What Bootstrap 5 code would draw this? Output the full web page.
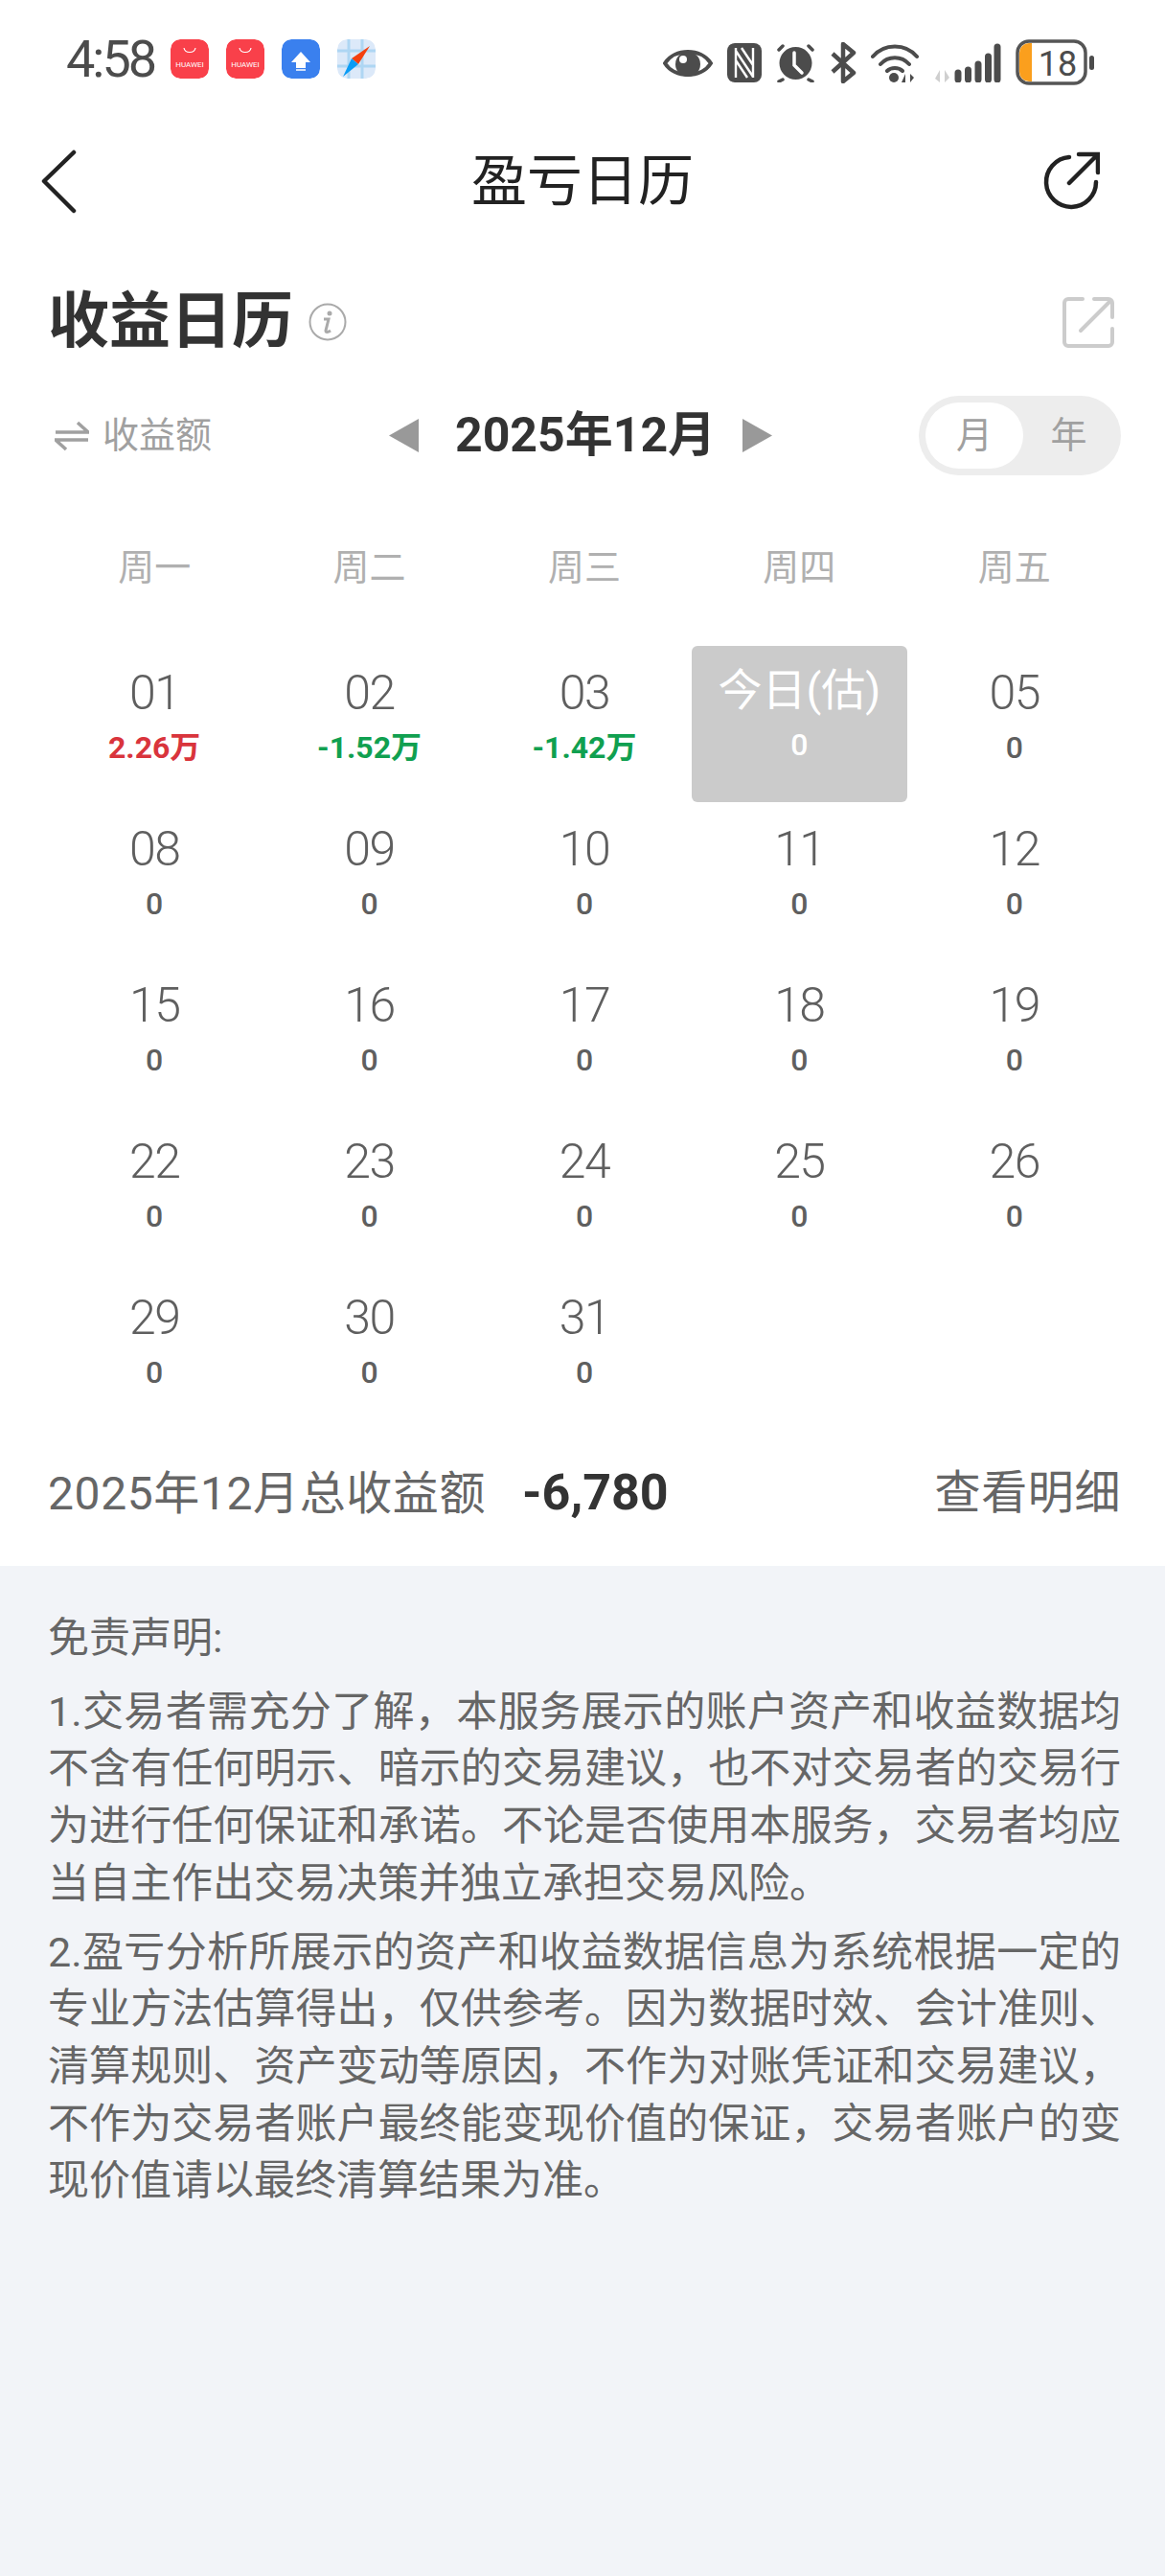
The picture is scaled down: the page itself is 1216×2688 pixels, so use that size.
<!DOCTYPE html>
<html lang="zh-CN">
<head>
<meta charset="UTF-8">
<title>盈亏日历</title>
<link href="https://cdn.jsdelivr.net/npm/bootstrap@5.3.0/dist/css/bootstrap.min.css" rel="stylesheet">
<style>
    body {
        width: 1216px;
        min-height: 2688px;
        background: #f2f4f8;
        font-family: Roboto, "Noto Sans CJK SC", sans-serif;
        color: #333;
    }
    .top-area { background: #fff; height: 1634px; }

    /* status bar */
    .status-bar { height: 139px; padding: 41px 73px 0 69px; }
    .clock { font-size: 54px; line-height: 41px; color: #4c4c4c; width: 109px; letter-spacing: -3px; }
    .app-tile { width: 40px; height: 41px; border-radius: 10px; }
    .tile-gap { gap: 18px; }
    .status-icons { gap: 15px; }

    /* nav */
    .nav-head { display: grid; grid-template-columns: 1fr auto 1fr; padding: 0 43px; height: 100px; }
    .nav-title { font-size: 58px; line-height: 100px; color: #222; font-weight: 400; }
    .nav-open { margin-right: 25px; }

    /* heading */
    .cal-head { padding: 0 52px 0 50px; margin-top: 56px; height: 82px; }
    .cal-title { font-size: 64px; line-height: 82px; font-weight: 700; color: #333; margin: 0; }

    /* switch row */
    .switch-row { padding: 0 46px 0 57px; height: 83px; margin-top: 36px; }
    .by-amount { font-size: 38px; color: #a0a0a0; width: 349px; gap: 14px; }
    .month-label { font-size: 50px; font-weight: 700; color: #333; width: 268px; text-align: center; margin: 0 32px 0 38px; white-space: nowrap; }
    .range-toggle { width: 211px; height: 83px; border-radius: 42px; background: #ededed; padding: 7px; font-size: 38px; color: #a0a0a0; margin-left: auto; }
    .range-on { width: 102px; height: 69px; border-radius: 35px; background: #fff; }
    .range-off { width: 95px; }

    /* calendar */
    .week-row, .day-grid { display: grid; grid-template-columns: repeat(5, 224.4px); padding-left: 49px; }
    .week-row { font-size: 38px; color: #b0b0b0; text-align: center; line-height: 50px; margin-top: 71px; }
    .day-grid { grid-auto-rows: 163px; margin-top: 57px; }
    .day-cell { text-align: center; padding-top: 21px; color: #5f5f5f; }
    .day-num { font-size: 50px; line-height: 56px; font-weight: 300; letter-spacing: -1.5px; }
    .day-val { font-size: 32px; line-height: 40px; margin-top: 9px; font-weight: 500; }
    .val-up { color: #d9343c; font-weight: 700; }
    .val-down { color: #10a050; font-weight: 700; }
    .day-today { background: #cbcbcb; color: #fff; border-radius: 6px; padding-top: 18px; }
    .day-today .day-num { font-size: 46px; font-weight: 400; letter-spacing: 0; }

    /* total */
    .total-row { padding: 0 46px 0 50px; height: 80px; margin-top: 29px; font-size: 48px; color: #666; line-height: 80px; letter-spacing: .6px; }
    .total-sum { font-weight: 700; color: #333; font-size: 52px; margin-left: 38px; letter-spacing: 0; }

    /* disclaimer */
    .notice { padding: 46px 46px 0 50px; font-size: 43px; line-height: 59.7px; color: #666; text-align: justify; }
    .notice p { margin: 0 0 12px; }
    .notice .notice-head { margin-bottom: 17px; }
</style>
</head>
<body>
<div class="top-area">
    <div class="status-bar d-flex align-items-start">
        <div class="clock">4:58</div>
        <div class="d-flex tile-gap">
            <svg class="app-tile" viewBox="0 0 40 41"><rect width="40" height="41" rx="10" fill="#f9404a"/><path d="M14 9c1 6 11 6 12 0" fill="none" stroke="#fff" stroke-width="1.2"/><text x="20" y="29" font-size="8" fill="#fff" text-anchor="middle" font-family="Roboto">HUAWEI</text></svg>
            <svg class="app-tile" viewBox="0 0 40 41"><rect width="40" height="41" rx="10" fill="#f9404a"/><path d="M14 9c1 6 11 6 12 0" fill="none" stroke="#fff" stroke-width="1.2"/><text x="20" y="29" font-size="8" fill="#fff" text-anchor="middle" font-family="Roboto">HUAWEI</text></svg>
            <svg class="app-tile" viewBox="0 0 40 41"><rect width="40" height="41" rx="10" fill="#3a80ee"/><path d="M20 13l10 11h-5v6H15v-6h-5z" fill="#fff"/><rect x="15" y="31" width="10" height="2" fill="#cfe0fb"/></svg>
            <svg class="app-tile" viewBox="0 0 40 41"><rect width="40" height="41" rx="10" fill="#dce9f9"/><path d="M12 0v41M26 0v41M0 12h40M0 28h40" stroke="#aed6f3" stroke-width="3"/><path d="M34 7L22 26 15 20z" fill="#f4400f"/><path d="M6 39l9-19 7 6z" fill="#0a9cf5"/></svg>
        </div>
        <div class="status-icons d-flex ms-auto align-items-center">
            <svg width="52" height="41" viewBox="0 0 52 41"><path d="M2 21C12 5 40 5 50 21 40 37 12 37 2 21z" fill="none" stroke="#4c4c4c" stroke-width="4"/><circle cx="26" cy="22" r="13" fill="#4c4c4c"/><circle cx="21" cy="17" r="4" fill="#fff"/></svg>
            <svg width="36" height="41" viewBox="0 0 36 41"><rect width="36" height="41" rx="8" fill="#4c4c4c"/><path d="M9 5v31M27 5v31M9 8l18 27M9 18l12 18M15 5l12 18" stroke="#fff" stroke-width="2.4" fill="none"/></svg>
            <svg width="41" height="41" viewBox="0 0 41 41"><circle cx="20.500" cy="21" r="17" fill="#4c4c4c"/><path d="M19 10v13l8 8" stroke="#fff" stroke-width="3.500" fill="none" stroke-linecap="round"/><path d="M3 7l4-4M38 7l-4-4M7 38l-4 2M34 38l4 2" stroke="#4c4c4c" stroke-width="3.500" stroke-linecap="round"/></svg>
            <svg width="28" height="43" viewBox="0 0 28 43"><path d="M3 12l22 20-11 9V2l11 9L3 31" fill="none" stroke="#4c4c4c" stroke-width="4.500" stroke-linejoin="round"/></svg>
            <svg width="50" height="41" viewBox="0 0 50 41"><path d="M2 14C14 0 36 0 48 14M10 22c8-9 22-9 30 0M17 29c4-4 12-4 16 0" fill="none" stroke="#4c4c4c" stroke-width="4" stroke-linecap="round"/><circle cx="24" cy="36" r="5" fill="#4c4c4c"/><path d="M36 41v-9l-4 9zM41 32v9l4-5z" fill="#4c4c4c"/></svg>
            <svg width="71" height="41" viewBox="0 0 71 41"><path d="M7 41V28l-5 9zM12 28v13l5-5z" fill="#cfcfcf"/><path d="M26 38v-7M36.500 38V28M47 38V22M57.500 38V14M67 38V4" fill="none" stroke="#4c4c4c" stroke-width="7" stroke-linecap="round"/></svg>
            <svg width="83" height="48" viewBox="0 0 83 48"><rect x="2" y="2" width="71" height="44" rx="12" fill="#fff" stroke="#555" stroke-width="3.500"/><path d="M4 14a10 10 0 0 1 10-10h3v40h-3a10 10 0 0 1-10-10z" fill="#fb9f1d"/><text x="44" y="38" font-size="36" fill="#4c4c4c" text-anchor="middle" font-family="Roboto">18</text><rect x="77" y="17" width="5" height="15" rx="2.500" fill="#4c4c4c"/></svg>
        </div>
    </div>

    <div class="nav-head align-items-center">
        <svg width="37" height="67" viewBox="0 0 37 67"><path d="M34 3L3 33l31 31" fill="none" stroke="#222" stroke-width="4.500" stroke-linecap="round" stroke-linejoin="round"/></svg>
        <div class="nav-title">盈亏日历</div>
        <svg class="nav-open ms-auto" width="60" height="62" viewBox="0 0 60 62"><path d="M28 6A26 26 0 1 0 56 32" fill="none" stroke="#222" stroke-width="4.500" stroke-linecap="round"/><path d="M28 33L57 4M38 3h20v19" fill="none" stroke="#222" stroke-width="4.500" stroke-linecap="round"/></svg>
    </div>

    <div class="cal-head d-flex align-items-center">
        <h1 class="cal-title">收益日历</h1>
        <svg class="ms-3" width="40" height="40" viewBox="0 0 40 40"><circle cx="20" cy="20" r="18.500" fill="none" stroke="#aaa" stroke-width="2"/><circle cx="22" cy="11" r="2.500" fill="#aaa"/><path d="M16 17h5l-3 12c0 2 2 2 5 0" fill="none" stroke="#aaa" stroke-width="3"/></svg>
        <svg class="ms-auto" width="56" height="55" viewBox="0 0 56 55"><path d="M22 3H7a4 4 0 0 0-4 4v41a4 4 0 0 0 4 4h42a4 4 0 0 0 4-4V34M34 3h15a4 4 0 0 1 4 4v15M20 36L51 5" fill="none" stroke="#ccc" stroke-width="4" stroke-linecap="round"/></svg>
    </div>

    <div class="switch-row d-flex align-items-center">
        <div class="by-amount d-flex align-items-center">
            <svg width="36" height="32" viewBox="0 0 36 32"><path d="M1 12h34L24 2M35 20H1l11 10" fill="none" stroke="#a0a0a0" stroke-width="3.500"/></svg>
            <span>收益额</span>
        </div>
        <svg width="31" height="35" viewBox="0 0 31 35"><path d="M31 0v35L0 17.500z" fill="#999"/></svg>
        <div class="month-label">2025年12月</div>
        <svg width="31" height="35" viewBox="0 0 31 35"><path d="M0 0v35l31-17.500z" fill="#999"/></svg>
        <div class="range-toggle d-flex align-items-center">
            <div class="range-on d-flex align-items-center justify-content-center">月</div>
            <div class="range-off text-center">年</div>
        </div>
    </div>

    <div class="week-row"><div>周一</div><div>周二</div><div>周三</div><div>周四</div><div>周五</div></div>

    <div class="day-grid">
        <div class="day-cell"><div class="day-num">01</div><div class="day-val val-up">2.26万</div></div>
        <div class="day-cell"><div class="day-num">02</div><div class="day-val val-down">-1.52万</div></div>
        <div class="day-cell"><div class="day-num">03</div><div class="day-val val-down">-1.42万</div></div>
        <div class="day-cell day-today"><div class="day-num">今日(估)</div><div class="day-val">0</div></div>
        <div class="day-cell"><div class="day-num">05</div><div class="day-val">0</div></div>
        <div class="day-cell"><div class="day-num">08</div><div class="day-val">0</div></div>
        <div class="day-cell"><div class="day-num">09</div><div class="day-val">0</div></div>
        <div class="day-cell"><div class="day-num">10</div><div class="day-val">0</div></div>
        <div class="day-cell"><div class="day-num">11</div><div class="day-val">0</div></div>
        <div class="day-cell"><div class="day-num">12</div><div class="day-val">0</div></div>
        <div class="day-cell"><div class="day-num">15</div><div class="day-val">0</div></div>
        <div class="day-cell"><div class="day-num">16</div><div class="day-val">0</div></div>
        <div class="day-cell"><div class="day-num">17</div><div class="day-val">0</div></div>
        <div class="day-cell"><div class="day-num">18</div><div class="day-val">0</div></div>
        <div class="day-cell"><div class="day-num">19</div><div class="day-val">0</div></div>
        <div class="day-cell"><div class="day-num">22</div><div class="day-val">0</div></div>
        <div class="day-cell"><div class="day-num">23</div><div class="day-val">0</div></div>
        <div class="day-cell"><div class="day-num">24</div><div class="day-val">0</div></div>
        <div class="day-cell"><div class="day-num">25</div><div class="day-val">0</div></div>
        <div class="day-cell"><div class="day-num">26</div><div class="day-val">0</div></div>
        <div class="day-cell"><div class="day-num">29</div><div class="day-val">0</div></div>
        <div class="day-cell"><div class="day-num">30</div><div class="day-val">0</div></div>
        <div class="day-cell"><div class="day-num">31</div><div class="day-val">0</div></div>
    </div>

    <div class="total-row d-flex justify-content-between">
        <div>2025年12月总收益额<span class="total-sum">-6,780</span></div>
        <div>查看明细</div>
    </div>
</div>

<div class="notice">
    <p class="notice-head">免责声明:</p>
    <p>1.交易者需充分了解，本服务展示的账户资产和收益数据均不含有任何明示、暗示的交易建议，也不对交易者的交易行为进行任何保证和承诺。不论是否使用本服务，交易者均应当自主作出交易决策并独立承担交易风险。</p>
    <p>2.盈亏分析所展示的资产和收益数据信息为系统根据一定的专业方法估算得出，仅供参考。因为数据时效、会计准则、清算规则、资产变动等原因，不作为对账凭证和交易建议，不作为交易者账户最终能变现价值的保证，交易者账户的变现价值请以最终清算结果为准。</p>
</div>
<script src="https://cdn.jsdelivr.net/npm/bootstrap@5.3.0/dist/js/bootstrap.bundle.min.js"></script>
</body>
</html>
